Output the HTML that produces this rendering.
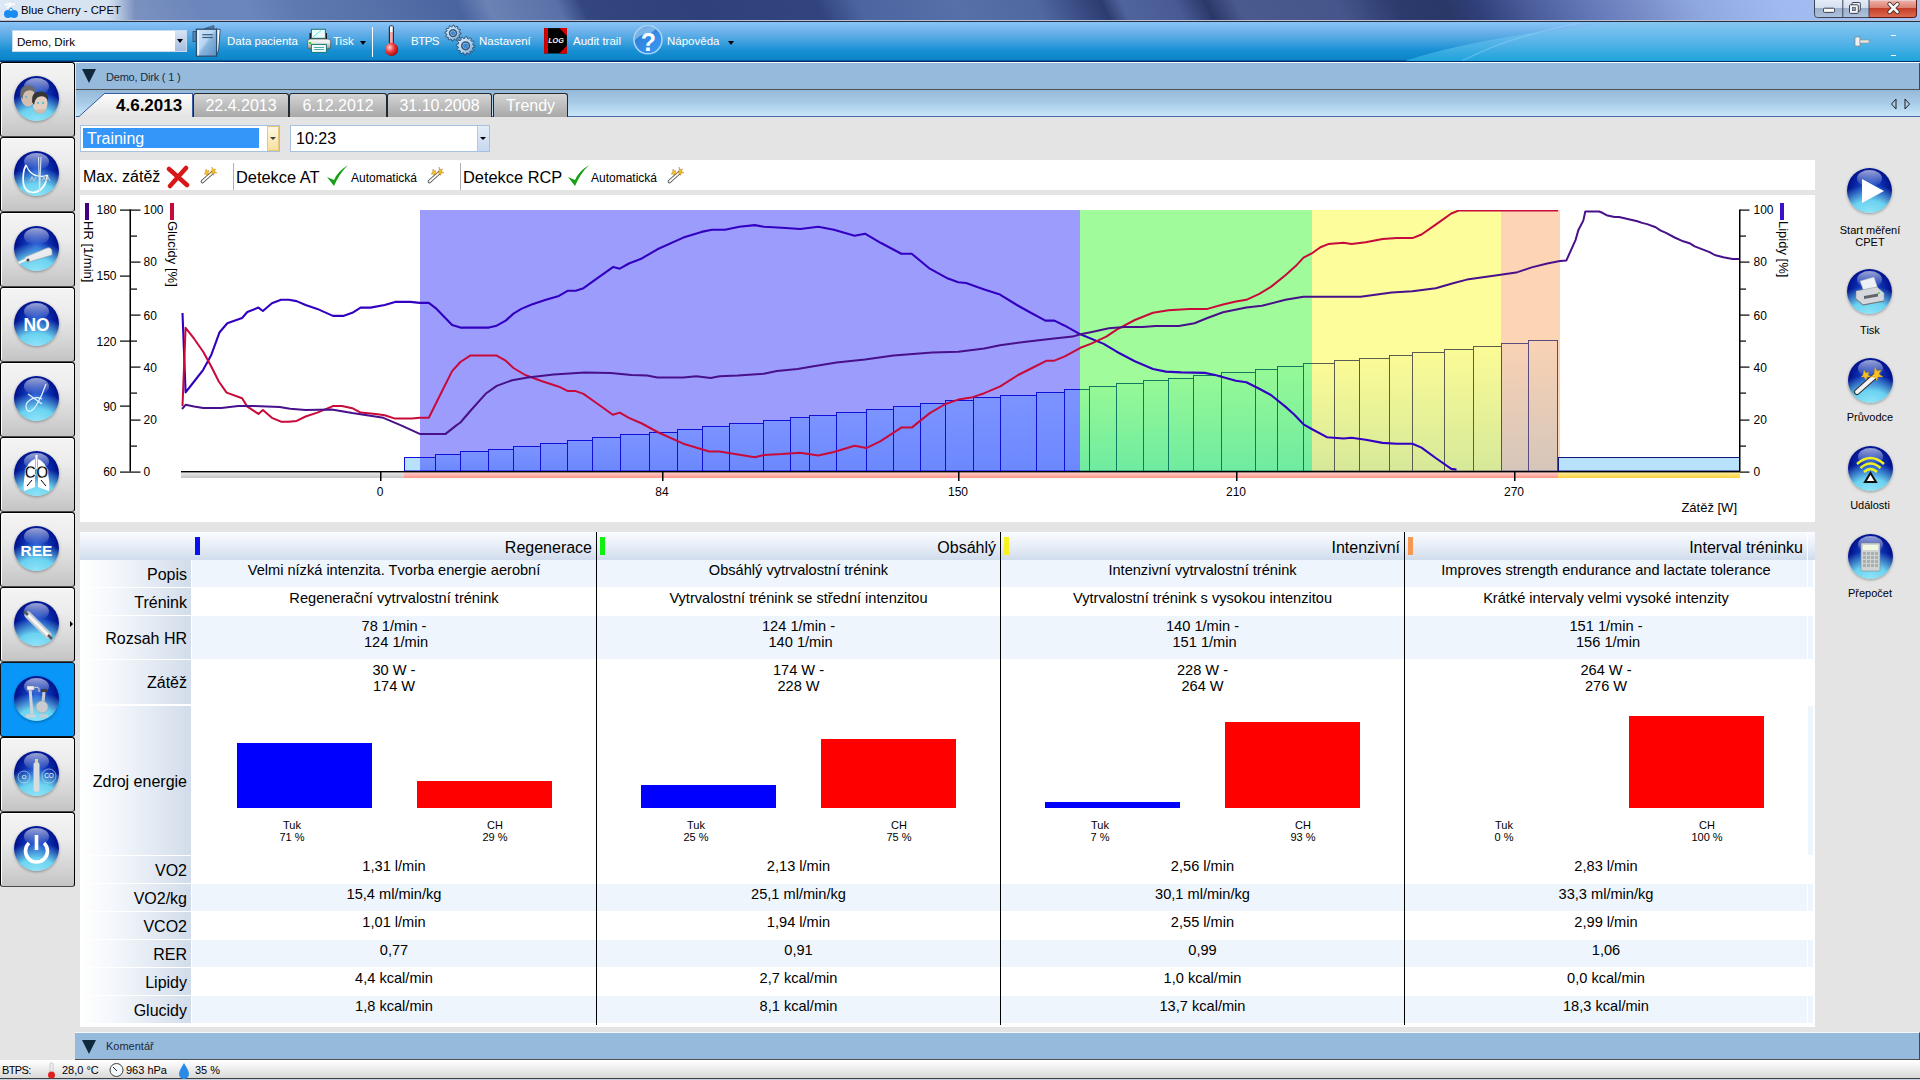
<!DOCTYPE html>
<html><head><meta charset="utf-8">
<style>
*{box-sizing:border-box}
html,body{margin:0;padding:0}
body{width:1920px;height:1080px;position:relative;overflow:hidden;background:#e4e4e4;font-family:"Liberation Sans",sans-serif;color:#000}
.a{position:absolute}
#title{left:0;top:0;width:1920px;height:21px;background:#5870a8 linear-gradient(64deg,#8aa0c8 4px,#8aa0c8 105px,#7c92c0 119px,#6c86bc 184px,#6a86bc 229px,#5e78b0 274px,#5670a8 346px,#4a64a0 418px,#6a82b4 445px,#5a70a8 508px,#34467e 530px,#30407a 634px,#32447e 742px,#4c64a0 778px,#5870a8 867px,#5068a0 939px,#3a4c84 975px,#2c3c70 998px,#50649c 1016px,#485a94 1065px,#2a3868 1092px,#4a5a8e 1119px,#46568c 1209px,#2c3a6c 1263px,#2a3868 1308px,#30407a 1335px,#4a5c9a 1380px,#6478b8 1434px,#7488c4 1470px,#90a8e0 1533px,#a0baf0 1605px,#a8c0f2 1730px)}
#title .t{left:21px;top:4px;font-size:11.3px;color:#000;letter-spacing:0}
#toolbar{left:0;top:20px;width:1920px;height:43px;background:linear-gradient(180deg,#b8c0d4 0,#b8c0d4 1px,#283040 1px,#283040 2px,#88c4f8 2px,#72b4ec 10px,#48a4e0 20px,#1a90d4 30px,#0a84c8 40px,#003070 41px,#003070 42px,#fff 42px)}
.tb{color:#fff;font-size:11.5px}
#sidebar .btn{position:absolute;left:0;width:75px;height:75px;border:1px solid #000;border-bottom-color:#4a4a4a;border-radius:3px;background:linear-gradient(180deg,#f4f4f4 0,#ececec 35%,#d4d4d4 75%,#c4c4c4 100%);box-shadow:inset 1px 1px 0 #fff}
#sidebar .btn.act{background:#0896f8;border-color:#101010;box-shadow:none}
.orb{position:absolute;left:13px;top:12.5px;width:45px;height:45px;border-radius:50%;background:radial-gradient(ellipse 95% 62% at 50% 100%,#90e4f8 0,#6ad2f0 45%,rgba(80,190,235,0) 100%),radial-gradient(circle at 50% 45%,#2a60d8 0,#0c30b0 36%,#000e88 66%,#000058 100%);box-shadow:0 1px 3px rgba(0,0,0,.35)}
.orb .hl{position:absolute;left:10px;top:2px;width:25px;height:17px;border-radius:50%;background:linear-gradient(180deg,rgba(255,255,255,.6),rgba(255,255,255,0))}
#phead{left:76px;top:63px;width:1844px;height:27px;background:#96badc;border-bottom:1px solid #505050;border-right:1px solid #484848}
#tabs{left:76px;top:90px;width:1844px;height:27px;background:linear-gradient(180deg,#94b8d8 0,#a8cce8 50%,#c8e6f8 100%);border-bottom:1px solid #4a6aa8}
.tab{position:absolute;top:3px;height:24px;border:1px solid #202830;border-bottom:none;border-radius:3px 3px 0 0;background:linear-gradient(180deg,#d4d4d4,#a8a8a8);color:#fff;font-size:16px;text-align:center;line-height:23px}
#content{left:75px;top:117px;width:1845px;height:943px;background:#e4e4e4}
.cb{position:absolute;background:#fff;border:1px solid #a8c0e0}
.white{position:absolute;background:#fff}
.lbl{position:absolute;font-size:16px;text-align:right}
.cell{position:absolute;font-size:14.6px;text-align:center;line-height:16px}
.rs{color:#000}
</style></head><body>
<div id="title" class="a">
 <div class="a" style="left:0;top:0;width:140px;height:20px;background:linear-gradient(90deg,#dce8f4 0,#d6e2f0 108px,rgba(160,180,214,0) 135px)"></div>
 <svg class="a" style="left:2px;top:2px" width="18" height="17" viewBox="0 0 18 17"><path d="M3 3 L9 1 M5 6 Q8 2 13 2" stroke="#fff" stroke-width="1.5" fill="none"/><circle cx="6" cy="12" r="4" fill="#1a8cf0"/><circle cx="12" cy="12" r="4" fill="#1a8cf0"/><path d="M7 8 Q9 4 11 8" stroke="#1a8cf0" fill="none"/></svg>
 <div class="a t">Blue Cherry - CPET</div>
 <svg class="a" style="left:1812px;top:0" width="108" height="20" viewBox="1812 0 108 20"><defs>
 <linearGradient id="wbg" x1="0" y1="0" x2="0" y2="1"><stop offset="0" stop-color="#e4ecf8"/><stop offset=".45" stop-color="#d4dfee"/><stop offset=".46" stop-color="#9cb0cc"/><stop offset="1" stop-color="#b0c2dc"/></linearGradient>
 <linearGradient id="wbr" x1="0" y1="0" x2="0" y2="1"><stop offset="0" stop-color="#eeb0a8"/><stop offset=".45" stop-color="#dc8070"/><stop offset=".46" stop-color="#c43c28"/><stop offset="1" stop-color="#dc6a50"/></linearGradient></defs>
 <path d="M1814.5 0 V14.5 Q1814.5 17.5 1817.5 17.5 H1913.5 Q1916.5 17.5 1916.5 14.5 V0" fill="url(#wbg)" stroke="#3c4456" stroke-width="1"/>
 <path d="M1869 0.5 H1916 V14.5 Q1916 17 1913.5 17 H1869 Z" fill="url(#wbr)"/>
 <path d="M1916.5 0 V14.5 Q1916.5 17.5 1913.5 17.5 H1869" fill="none" stroke="#5a1a10" stroke-width="1"/>
 <rect x="1842.3" y="0" width="1" height="17" fill="#3c4456"/><rect x="1868.5" y="0" width="1" height="17" fill="#3c4456"/>
 <rect x="1823.5" y="8.2" width="11" height="4.2" rx="1" fill="#f8f8f8" stroke="#3a4050" stroke-width="1"/>
 <rect x="1852" y="2.5" width="8.3" height="8.6" rx="1" fill="#f4f4f4" stroke="#3a4050" stroke-width="1"/>
 <rect x="1849.5" y="4.8" width="8.8" height="8.6" rx="1" fill="#f4f4f4" stroke="#3a4050" stroke-width="1"/>
 <rect x="1852.3" y="7.5" width="3.2" height="3.2" fill="#8aa0bc" stroke="#3a4050" stroke-width=".6"/>
 <path d="M1889.5 4 L1897.5 12 M1897.5 4 L1889.5 12" stroke="#3a2020" stroke-width="4.2" stroke-linecap="round"/>
 <path d="M1889.5 4 L1897.5 12 M1897.5 4 L1889.5 12" stroke="#fafafa" stroke-width="2.6" stroke-linecap="round"/>
 </svg>
</div>
<div id="toolbar" class="a"><svg class="a" style="left:0;top:2px" width="1920" height="39"><defs><linearGradient id="tbs" x1="0" y1="0" x2="0" y2="1"><stop offset="0" stop-color="#86c6f2"/><stop offset="0.5" stop-color="#58b4e8"/><stop offset="1" stop-color="#1ea4dc"/></linearGradient><linearGradient id="tbd" x1="0" y1="0" x2="1" y2="0"><stop offset="0" stop-color="#0050b0" stop-opacity="0"/><stop offset="1" stop-color="#0050b0" stop-opacity="0.22"/></linearGradient></defs><path d="M1405 39 Q1480 14 1625 0 H1920 V39 Z" fill="url(#tbs)"/><path d="M1462 39 Q1510 14 1580 1" fill="none" stroke="#a0d8f8" stroke-opacity=".35" stroke-width="1.5"/></svg><div class="a" style="left:0;top:1px;width:1920px;height:41px">
 <div class="a" style="left:12px;top:9px;width:175px;height:22px;background:#fff;border:1px solid #c8dcf0"></div>
 <div class="a" style="left:17px;top:14px;font-size:11.6px">Demo, Dirk</div>
 <div class="a" style="left:175px;top:10px;width:11px;height:20px;background:linear-gradient(180deg,#d8e4f4,#a8bce0)"></div>
 <div class="a" style="left:177px;top:18px;width:0;height:0;border-left:3.5px solid transparent;border-right:3.5px solid transparent;border-top:4px solid #000"></div>
 <div class="a tb" style="left:227px;top:14px">Data pacienta</div>
 <div class="a tb" style="left:333px;top:14px">Tisk</div>
 <div class="a" style="left:360px;top:20px;width:0;height:0;border-left:3.5px solid transparent;border-right:3.5px solid transparent;border-top:4px solid #000"></div>
 <div class="a" style="left:372px;top:6px;width:1px;height:30px;background:#fff"></div>
 <div class="a tb" style="left:411px;top:14px;letter-spacing:-0.5px">BTPS</div>
 <div class="a tb" style="left:479px;top:14px">Nastavení</div>
 <div class="a tb" style="left:573px;top:14px">Audit trail</div>
 <div class="a tb" style="left:667px;top:14px">Nápověda</div>
 <div class="a" style="left:728px;top:20px;width:0;height:0;border-left:3.5px solid transparent;border-right:3.5px solid transparent;border-top:4px solid #000"></div>
 <svg class="a" style="left:1854px;top:15px" width="16" height="11" viewBox="0 0 16 11"><rect x="1" y="1" width="5" height="9" fill="#f0f0f0" stroke="#808080" stroke-width=".7"/><rect x="6" y="4" width="9" height="3" fill="#e8e8e8" stroke="#909090" stroke-width=".6"/></svg>
 <div class="a" style="left:1891px;top:14px;width:5px;height:1px;background:#fff"></div>
 <div class="a" style="left:1891px;top:34px;width:5px;height:1px;background:#fff"></div>
</div></div>
<svg class="a" style="left:0;top:0" width="1920" height="62" viewBox="0 0 1920 62"><defs><linearGradient id="bindg" x1="0" y1="0" x2="1" y2="1"><stop offset="0" stop-color="#d0e6fa"/><stop offset=".45" stop-color="#b8d6f2"/><stop offset=".55" stop-color="#88b4dc"/><stop offset="1" stop-color="#5a90c4"/></linearGradient><linearGradient id="gearg" x1="0" y1="0" x2="1" y2="1"><stop offset="0" stop-color="#e8f4ff"/><stop offset=".6" stop-color="#a8cdf0"/><stop offset="1" stop-color="#6a90b8"/></linearGradient><linearGradient id="prb" x1="0" y1="0" x2="0" y2="1"><stop offset="0" stop-color="#fafafa"/><stop offset=".4" stop-color="#e8e8e8"/><stop offset="1" stop-color="#8a8a8a"/></linearGradient><radialGradient id="bulb" cx=".35" cy=".35" r=".7"><stop offset="0" stop-color="#ffd8d8"/><stop offset=".5" stop-color="#f03838"/><stop offset="1" stop-color="#a00808"/></radialGradient><linearGradient id="helpg" x1="0" y1="0" x2="1" y2="1"><stop offset="0" stop-color="#2a78d0"/><stop offset="1" stop-color="#3a9af8"/></linearGradient></defs><rect x="193" y="31.6" width="3.2" height="10" fill="#5a88b8" stroke="#2a4a70" stroke-width=".8"/><path d="M216 29 L220.2 29.4 L218.6 50 L216.5 55.5 Z" fill="#fff" stroke="#2a4a70" stroke-width=".9"/><path d="M204.5 28.6 L213.8 25.6 L214 29 Z" fill="#5a80a8" stroke="#2a4a70" stroke-width=".7"/><rect x="196.4" y="29.2" width="20.2" height="27" fill="url(#bindg)" stroke="#2a5070" stroke-width="1.3"/><rect x="197.4" y="30" width="1.6" height="25.4" fill="#e8f4ff"/><rect x="202.3" y="34.1" width="10.4" height="1.2" fill="#3a5a80"/><rect x="202.3" y="36.9" width="10.4" height="1.2" fill="#3a5a80"/><rect x="309.5" y="33" width="17.5" height="8" fill="#1a1a1a"/><rect x="311.4" y="29.3" width="14" height="9" fill="#e8fcfc" stroke="#1a7a70" stroke-width="1"/><path d="M313 37 L321 30.5" stroke="#70e0e0" stroke-width="1"/><rect x="307.6" y="39" width="23" height="10" rx="2.5" fill="url(#prb)" stroke="#505050" stroke-width=".7"/><rect x="308.8" y="42" width="2.3" height="1.8" fill="#10e010"/><rect x="311.4" y="44.4" width="15" height="8" fill="#f0fcfc" stroke="#1a7a70" stroke-width="1"/><rect x="314" y="47" width="10" height=".9" fill="#40a0a0"/><rect x="314" y="49" width="10" height=".9" fill="#40a0a0"/><rect x="388.8" y="25.3" width="5.2" height="19" rx="2.6" fill="#303030"/><rect x="390" y="26.3" width="2.8" height="6" fill="#fafafa"/><rect x="390" y="32" width="2.8" height="12" fill="#f8a8a8"/><circle cx="391.6" cy="49.4" r="6.6" fill="url(#bulb)"/><polygon points="461.00,33.10 460.93,34.14 459.18,34.76 458.91,35.55 459.93,37.10 459.35,37.97 457.53,37.63 456.90,38.18 457.00,40.03 456.06,40.49 454.66,39.28 453.84,39.45 453.00,41.10 451.96,41.03 451.34,39.28 450.55,39.01 449.00,40.03 448.13,39.45 448.47,37.63 447.92,37.00 446.07,37.10 445.61,36.16 446.82,34.76 446.65,33.94 445.00,33.10 445.07,32.06 446.82,31.44 447.09,30.65 446.07,29.10 446.65,28.23 448.47,28.57 449.10,28.02 449.00,26.17 449.94,25.71 451.34,26.92 452.16,26.75 453.00,25.10 454.04,25.17 454.66,26.92 455.45,27.19 457.00,26.17 457.87,26.75 457.53,28.57 458.08,29.20 459.93,29.10 460.39,30.04 459.18,31.44 459.35,32.26" fill="url(#gearg)" stroke="#2a4868" stroke-width=".9"/><circle cx="453.0" cy="33.1" r="3.4" fill="none" stroke="#3a5878" stroke-width="1.6"/><circle cx="453.0" cy="33.1" r="2.2" fill="#3a8ad8"/><polygon points="474.90,45.80 474.82,47.01 472.75,47.72 472.44,48.63 473.65,50.45 472.98,51.46 470.83,51.03 470.10,51.67 470.25,53.85 469.16,54.39 467.52,52.95 466.57,53.14 465.60,55.10 464.39,55.02 463.68,52.95 462.77,52.64 460.95,53.85 459.94,53.18 460.37,51.03 459.73,50.30 457.55,50.45 457.01,49.36 458.45,47.72 458.26,46.77 456.30,45.80 456.38,44.59 458.45,43.88 458.76,42.97 457.55,41.15 458.22,40.14 460.37,40.57 461.10,39.93 460.95,37.75 462.04,37.21 463.68,38.65 464.63,38.46 465.60,36.50 466.81,36.58 467.52,38.65 468.43,38.96 470.25,37.75 471.26,38.42 470.83,40.57 471.47,41.30 473.65,41.15 474.19,42.24 472.75,43.88 472.94,44.83" fill="url(#gearg)" stroke="#2a4868" stroke-width=".9"/><circle cx="465.6" cy="45.8" r="3.8" fill="none" stroke="#3a5878" stroke-width="1.6"/><circle cx="465.6" cy="45.8" r="2.6" fill="#3a8ad8"/><rect x="544.1" y="28.1" width="22.8" height="25.4" fill="#000"/><rect x="544.1" y="28.1" width="3.9" height="25.4" fill="#d80000"/><path d="M559.3 28.1 H566.9 V36 Z M559.3 53.5 H566.9 V45.6 Z" fill="#d80000"/><text x="556" y="43" font-size="7.2" font-style="italic" font-weight="bold" fill="#fff" text-anchor="middle" font-family="Liberation Sans">LOG</text><circle cx="648" cy="39.8" r="14" fill="url(#helpg)" stroke="#a8d4f4" stroke-width="1.6"/><path d="M635 40 Q640 34 651 33 L657 28 Q648 25.5 640 28.5 Q635 32 635 40Z" fill="#9ac8ec" opacity=".7"/><text x="648.5" y="50.5" font-size="25" font-weight="bold" fill="#fff" text-anchor="middle" font-family="Liberation Sans">?</text></svg>
<div id="sidebar">
<div class="btn" style="top:62px"><div class="orb"><div class="hl"></div></div><svg class="a" style="left:13px;top:12.5px" width="46" height="46"><ellipse cx="14" cy="21" rx="7" ry="9.5" fill="#d4beb0"/><path d="M6.5 21 Q5 9.5 14 9.5 Q22.5 9.5 21.5 18 Q19 13.5 14 14.5 Q9 15 8.5 23Z" fill="#6a6a6a"/><ellipse cx="26" cy="27" rx="7.5" ry="10" fill="#e2cec2"/><path d="M18 26 Q17 15.5 26 15.5 Q35 15.5 34 24.5 Q31 19.5 26 20.5 Q21 21 20 29Z" fill="#353535"/><path d="M19 34 Q22 39 27 38 Q32 37 33 33" fill="#c8b0a0" opacity=".6"/><circle cx="24" cy="27" r="1" fill="#30c0d0"/><circle cx="29" cy="27" r="1" fill="#30c0d0"/><circle cx="12" cy="21" r=".9" fill="#30c0d0"/></svg></div>
<div class="btn" style="top:137px"><div class="orb"><div class="hl"></div></div><svg class="a" style="left:13px;top:12.5px" width="46" height="46"><path d="M12 14 Q8 22 9.5 33 Q11 41 19 41.5 Q27 41 31 33 Q33 28 33.5 24" fill="none" stroke="#fff" stroke-width="1.7"/><path d="M12 14 Q16 24 24 25 Q30 26 33.5 24" fill="none" stroke="#fff" stroke-width="1.2"/><path d="M24.5 6 L25.5 41 L27 6" fill="none" stroke="#d8e0e8" stroke-width="1.1"/><path d="M16 30 L18 26 L20 30 L22 26 M28 30 L30 26 L32 30 L34 26 L36 30" fill="none" stroke="#b8c4d0" stroke-width="1.1"/></svg></div>
<div class="btn" style="top:212px"><div class="orb"><div class="hl"></div></div><svg class="a" style="left:13px;top:12.5px" width="46" height="46"><path d="M11 31 L33 22 Q37 21 38 25 L38 29 L15 36 Q11 36 11 32Z" fill="#e8ecee" stroke="#98a0a8" stroke-width=".7"/><path d="M4 36 L12 32 L12 35 L5 38Z" fill="#f0f0f0"/><circle cx="14" cy="34" r="1.5" fill="#404040"/></svg></div>
<div class="btn" style="top:287px"><div class="orb"><div class="hl"></div></div><svg class="a" style="left:13px;top:12.5px" width="46" height="46"><text x="22.5" y="30" font-size="17.5" font-weight="bold" fill="#fff" text-anchor="middle" font-family="Liberation Sans">NO</text></svg></div>
<div class="btn" style="top:362px"><div class="orb"><div class="hl"></div></div><svg class="a" style="left:13px;top:12.5px" width="46" height="46"><path d="M32 8 Q28 20 22 30 Q16 38 13 34 Q10 28 16 24 Q22 20 28 23 M14 18 L28 28" fill="none" stroke="#e8f4ff" stroke-width="1.2"/></svg></div>
<div class="btn" style="top:437px"><div class="orb"><div class="hl"></div></div><svg class="a" style="left:13px;top:12.5px" width="46" height="46"><path d="M21 8 Q14 10 11 22 Q9 34 10 40 Q16 38 21 36Z M24 8 Q31 10 34 22 Q36 34 35 40 Q29 38 24 36Z" fill="#fff"/><rect x="21.5" y="4" width="2" height="14" fill="#fff"/><text x="22.5" y="27" font-size="16" font-weight="bold" fill="#000" text-anchor="middle" font-family="Liberation Sans" stroke="#fff" stroke-width=".6">CO</text><path d="M18 29 L13 35 M27 29 L32 35" stroke="#000" stroke-width="1"/></svg></div>
<div class="btn" style="top:512px"><div class="orb"><div class="hl"></div></div><svg class="a" style="left:13px;top:12.5px" width="46" height="46"><text x="22.5" y="29.5" font-size="15.5" font-weight="bold" fill="#fff" text-anchor="middle" font-family="Liberation Sans">REE</text></svg></div>
<div class="btn" style="top:587px"><div class="orb"><div class="hl"></div></div><svg class="a" style="left:13px;top:12.5px" width="46" height="46"><path d="M14 14 L34 34" stroke="#c8ccd0" stroke-width="7" stroke-linecap="round"/><path d="M14 14 L34 34" stroke="#f4f6f8" stroke-width="3" stroke-linecap="round"/><path d="M10 10 L14 14 M34 34 L38 38" stroke="#505860" stroke-width="2.5"/></svg></div>
<div class="btn act" style="top:662px"><div class="orb"><div class="hl"></div></div><svg class="a" style="left:13px;top:12.5px" width="46" height="46"><path d="M16 12 L18 38 M12 40 H22" stroke="#d0d4d8" stroke-width="3" fill="none"/><rect x="13" y="10" width="7" height="4" fill="#f0f0f0" stroke="#909090" stroke-width=".5"/><path d="M20 12 Q26 9 25 16" stroke="#e0e0e0" stroke-width="1" fill="none"/><path d="M30 16 L28 36 M26 40 H34" stroke="#c8ccd0" stroke-width="3"/><rect x="27" y="13" width="6" height="3" fill="#404040"/><circle cx="28" cy="31" r="6" fill="#c8ccd0" stroke="#a0a4a8" stroke-width=".6"/></svg></div>
<div class="btn" style="top:737px"><div class="orb"><div class="hl"></div></div><svg class="a" style="left:13px;top:12.5px" width="46" height="46"><rect x="19.5" y="11" width="6" height="30" rx="3" fill="#d8dcde"/><rect x="21" y="8" width="3" height="4" fill="#e0d890"/><circle cx="10" cy="26" r="6" fill="none" stroke="#d0e8f4" stroke-width=".6"/><circle cx="35" cy="25" r="7" fill="none" stroke="#d0e8f4" stroke-width=".6"/><text x="10" y="28" font-size="6" fill="#fff" text-anchor="middle" font-family="Liberation Sans">O</text><text x="35" y="27" font-size="6.5" fill="#fff" text-anchor="middle" font-family="Liberation Sans">CO</text></svg></div>
<div class="btn" style="top:812px"><div class="orb"><div class="hl"></div></div><svg class="a" style="left:13px;top:12.5px" width="46" height="46"><path d="M15 17 A11 11 0 1 0 30 17" fill="none" stroke="#fff" stroke-width="3.6"/><path d="M22.5 9 V24" stroke="#fff" stroke-width="3.6"/></svg></div>
<div class="a" style="left:70px;top:621px;width:0;height:0;border-top:3px solid transparent;border-bottom:3px solid transparent;border-left:3px solid #000"></div>
</div>
<div id="phead" class="a">
 <div class="a" style="left:6px;top:6px;width:0;height:0;border-left:7px solid transparent;border-right:7px solid transparent;border-top:14px solid #10283c"></div>
 <div class="a" style="left:30px;top:8px;font-size:11px;color:#1a2a40;letter-spacing:-0.2px">Demo, Dirk ( 1 )</div>
</div>
<div id="tabs" class="a">
 <svg class="a" style="left:0;top:0" width="120" height="27"><path d="M3 26.5 L28.5 3.5 H117 V27 H0 Z" fill="url(#tg)"/><defs><linearGradient id="tg" x1="0" y1="0" x2="0" y2="1"><stop offset="0" stop-color="#fcfcfc"/><stop offset="1" stop-color="#e4e4e4"/></linearGradient></defs><path d="M0 26.5 H3 L28.5 3.5 H117" fill="none" stroke="#3a5aa0" stroke-width="1"/></svg>
 <div class="a" style="left:28px;top:3px;width:89px;height:24px;background:linear-gradient(180deg,#fcfcfc,#e4e4e4);border-top:1px solid #3a5aa0;border-right:1px solid #3a5aa0"></div>
 <div class="a" style="left:40px;top:6px;font-size:17px;font-weight:bold">4.6.2013</div>
 <div class="tab" style="left:117px;width:96px">22.4.2013</div>
 <div class="tab" style="left:213px;width:98px">6.12.2012</div>
 <div class="tab" style="left:311px;width:105px">31.10.2008</div>
 <div class="tab" style="left:417px;width:75px">Trendy</div>
 <svg class="a" style="left:1814px;top:8px" width="22" height="12" viewBox="0 0 22 12"><path d="M6 1 L1.5 6 L6 11 Z" fill="none" stroke="#202020"/><path d="M15 1 L19.5 6 L15 11 Z" fill="none" stroke="#202020"/></svg>
</div>
<div class="cb" style="left:80px;top:125px;width:200px;height:27px"></div>
<div class="a" style="left:83px;top:128px;width:176px;height:20px;background:#3396f8"></div>
<div class="a" style="left:87px;top:130px;font-size:16px;color:#fff">Training</div>
<div class="a" style="left:267px;top:126px;width:12px;height:25px;background:linear-gradient(180deg,#fff8e0,#f8e0a0);border:1px solid #e8c878"></div>
<div class="a" style="left:270px;top:137px;border-left:3px solid transparent;border-right:3px solid transparent;border-top:3px solid #404040"></div>
<div class="cb" style="left:290px;top:125px;width:200px;height:27px"></div>
<div class="a" style="left:296px;top:130px;font-size:16px;color:#000">10:23</div>
<div class="a" style="left:477px;top:126px;width:12px;height:25px;background:linear-gradient(180deg,#e4ecf8,#c8d8f0);border-left:1px solid #b8c8e0"></div>
<div class="a" style="left:480px;top:137px;border-left:3px solid transparent;border-right:3px solid transparent;border-top:3px solid #000"></div>
<div class="white" style="left:80px;top:160px;width:1735px;height:30px"></div>
<div class="a" style="left:83px;top:168px;font-size:16px">Max. zátěž</div>
<svg class="a" style="left:166px;top:165px" width="24" height="24" viewBox="0 0 24 24"><path d="M3 4 L21 20 M20 3 L4 21" stroke="#d81818" stroke-width="4.5" stroke-linecap="round"/></svg>
<svg class="a" style="left:200px;top:166px" width="18" height="18" viewBox="0 0 18 18"><path d="M2.5 15.5 L13 6" stroke="#404040" stroke-width="3.6" stroke-linecap="round"/><path d="M2.5 15.5 L13 6" stroke="#fafafa" stroke-width="2" stroke-linecap="round"/><path d="M6 3 L7 5 L9 4.5 L8 6.5 L10 8 L7.5 8 L7 10 L6 8 L4 8 L5.5 6.5Z M12 1 L13 3.5 L15.5 3 L14.5 5.5 L17 7 L14 7 L13.5 9.5 L12.5 7 L10 7 L12 5.5Z" fill="#f8c028" stroke="#b07818" stroke-width=".4"/></svg>
<div class="a" style="left:233px;top:163px;width:1px;height:27px;background:#b0b0b0"></div>
<div class="a" style="left:236px;top:168px;font-size:16.4px">Detekce AT</div>
<svg class="a" style="left:325px;top:164px" width="24" height="24" viewBox="0 0 24 24"><path d="M2 13 L9 22 Q14 10 23 1 Q12 8 9 16 Z" fill="#18a018"/></svg>
<div class="a" style="left:351px;top:171px;font-size:12px">Automatická</div>
<svg class="a" style="left:427px;top:166px" width="18" height="18" viewBox="0 0 18 18"><path d="M2.5 15.5 L13 6" stroke="#404040" stroke-width="3.6" stroke-linecap="round"/><path d="M2.5 15.5 L13 6" stroke="#fafafa" stroke-width="2" stroke-linecap="round"/><path d="M6 3 L7 5 L9 4.5 L8 6.5 L10 8 L7.5 8 L7 10 L6 8 L4 8 L5.5 6.5Z M12 1 L13 3.5 L15.5 3 L14.5 5.5 L17 7 L14 7 L13.5 9.5 L12.5 7 L10 7 L12 5.5Z" fill="#f8c028" stroke="#b07818" stroke-width=".4"/></svg>
<div class="a" style="left:460px;top:163px;width:1px;height:27px;background:#b0b0b0"></div>
<div class="a" style="left:463px;top:168px;font-size:16.4px">Detekce RCP</div>
<svg class="a" style="left:566px;top:164px" width="24" height="24" viewBox="0 0 24 24"><path d="M2 13 L9 22 Q14 10 23 1 Q12 8 9 16 Z" fill="#18a018"/></svg>
<div class="a" style="left:591px;top:171px;font-size:12px">Automatická</div>
<svg class="a" style="left:667px;top:166px" width="18" height="18" viewBox="0 0 18 18"><path d="M2.5 15.5 L13 6" stroke="#404040" stroke-width="3.6" stroke-linecap="round"/><path d="M2.5 15.5 L13 6" stroke="#fafafa" stroke-width="2" stroke-linecap="round"/><path d="M6 3 L7 5 L9 4.5 L8 6.5 L10 8 L7.5 8 L7 10 L6 8 L4 8 L5.5 6.5Z M12 1 L13 3.5 L15.5 3 L14.5 5.5 L17 7 L14 7 L13.5 9.5 L12.5 7 L10 7 L12 5.5Z" fill="#f8c028" stroke="#b07818" stroke-width=".4"/></svg>
<div class="white" style="left:80px;top:195px;width:1735px;height:327px"><svg width="1735" height="327" viewBox="80 195 1735 327" style="position:absolute;left:0;top:0">
<defs>
<linearGradient id="gb" x1="0" y1="0" x2="0" y2="1"><stop offset="0" stop-color="#7c94ff"/><stop offset="1" stop-color="#6c88ff"/></linearGradient><linearGradient id="gray" x1="0" y1="0" x2="0" y2="1"><stop offset="0" stop-color="#ececec"/><stop offset="1" stop-color="#c4c4c4"/></linearGradient><linearGradient id="redb" x1="0" y1="0" x2="0" y2="1"><stop offset="0" stop-color="#ffd4d0"/><stop offset="1" stop-color="#ff9488"/></linearGradient><linearGradient id="yelb" x1="0" y1="0" x2="0" y2="1"><stop offset="0" stop-color="#fff0a0"/><stop offset="1" stop-color="#ffd040"/></linearGradient>
<linearGradient id="gg" x1="0" y1="0" x2="0" y2="1"><stop offset="0" stop-color="#96f996"/><stop offset="1" stop-color="#6feba0"/></linearGradient>
<linearGradient id="gy" x1="0" y1="0" x2="0" y2="1"><stop offset="0" stop-color="#fbfb96"/><stop offset="1" stop-color="#d6e999"/></linearGradient>
<linearGradient id="go" x1="0" y1="0" x2="0" y2="1"><stop offset="0" stop-color="#f9d2b4"/><stop offset="1" stop-color="#d5c6ba"/></linearGradient>
<linearGradient id="glb" x1="0" y1="0" x2="0" y2="1"><stop offset="0" stop-color="#b4e0fc"/><stop offset="1" stop-color="#c0e8fc"/></linearGradient>
</defs>
<rect x="420" y="210" width="660" height="261" fill="#9c9cfc"/>
<rect x="1080" y="210" width="232" height="261" fill="#a0fc9a"/>
<rect x="1312" y="210" width="189" height="261" fill="#fdfd9b"/>
<rect x="1501" y="210" width="59" height="261" fill="#fdd4b4"/>
<clipPath id="cz0"><rect x="181" y="200" width="239" height="280"/></clipPath>
<g clip-path="url(#cz0)">
<rect x="404.5" y="457.5" width="31.0" height="13.5" fill="#b8e2fc" stroke="#0e10d8" stroke-width="1"/>
</g>
<clipPath id="cz1"><rect x="420" y="200" width="660" height="280"/></clipPath>
<g clip-path="url(#cz1)">
<rect x="404.5" y="457.5" width="31.0" height="13.5" fill="url(#gb)" stroke="#0e10d8" stroke-width="1"/>
<rect x="435.5" y="454.5" width="25.0" height="16.5" fill="url(#gb)" stroke="#0e10d8" stroke-width="1"/>
<rect x="460.5" y="451.5" width="28.0" height="19.5" fill="url(#gb)" stroke="#0e10d8" stroke-width="1"/>
<rect x="488.5" y="449.5" width="25.0" height="21.5" fill="url(#gb)" stroke="#0e10d8" stroke-width="1"/>
<rect x="513.5" y="446.5" width="27.0" height="24.5" fill="url(#gb)" stroke="#0e10d8" stroke-width="1"/>
<rect x="540.5" y="443.5" width="27.0" height="27.5" fill="url(#gb)" stroke="#0e10d8" stroke-width="1"/>
<rect x="567.5" y="440.5" width="25.0" height="30.5" fill="url(#gb)" stroke="#0e10d8" stroke-width="1"/>
<rect x="592.5" y="437.5" width="28.0" height="33.5" fill="url(#gb)" stroke="#0e10d8" stroke-width="1"/>
<rect x="620.5" y="434.5" width="29.0" height="36.5" fill="url(#gb)" stroke="#0e10d8" stroke-width="1"/>
<rect x="649.5" y="432.5" width="28.0" height="38.5" fill="url(#gb)" stroke="#0e10d8" stroke-width="1"/>
<rect x="677.5" y="429.5" width="25.0" height="41.5" fill="url(#gb)" stroke="#0e10d8" stroke-width="1"/>
<rect x="702.5" y="426.5" width="27.0" height="44.5" fill="url(#gb)" stroke="#0e10d8" stroke-width="1"/>
<rect x="729.5" y="423.5" width="34.0" height="47.5" fill="url(#gb)" stroke="#0e10d8" stroke-width="1"/>
<rect x="763.5" y="420.5" width="27.0" height="50.5" fill="url(#gb)" stroke="#0e10d8" stroke-width="1"/>
<rect x="790.5" y="417.5" width="19.0" height="53.5" fill="url(#gb)" stroke="#0e10d8" stroke-width="1"/>
<rect x="809.5" y="415.5" width="27.0" height="55.5" fill="url(#gb)" stroke="#0e10d8" stroke-width="1"/>
<rect x="836.5" y="412.5" width="30.0" height="58.5" fill="url(#gb)" stroke="#0e10d8" stroke-width="1"/>
<rect x="866.5" y="409.5" width="27.0" height="61.5" fill="url(#gb)" stroke="#0e10d8" stroke-width="1"/>
<rect x="893.5" y="406.5" width="27.0" height="64.5" fill="url(#gb)" stroke="#0e10d8" stroke-width="1"/>
<rect x="920.5" y="403.5" width="25.0" height="67.5" fill="url(#gb)" stroke="#0e10d8" stroke-width="1"/>
<rect x="945.5" y="400.5" width="28.0" height="70.5" fill="url(#gb)" stroke="#0e10d8" stroke-width="1"/>
<rect x="973.5" y="397.5" width="27.0" height="73.5" fill="url(#gb)" stroke="#0e10d8" stroke-width="1"/>
<rect x="1000.5" y="395.5" width="36.0" height="75.5" fill="url(#gb)" stroke="#0e10d8" stroke-width="1"/>
<rect x="1036.5" y="392.5" width="28.0" height="78.5" fill="url(#gb)" stroke="#0e10d8" stroke-width="1"/>
<rect x="1064.5" y="389.5" width="25.0" height="81.5" fill="url(#gb)" stroke="#0e10d8" stroke-width="1"/>
</g>
<clipPath id="cz2"><rect x="1080" y="200" width="232" height="280"/></clipPath>
<g clip-path="url(#cz2)">
<rect x="1064.5" y="389.5" width="25.0" height="81.5" fill="url(#gg)" stroke="#107a60" stroke-width="1"/>
<rect x="1089.5" y="386.5" width="27.0" height="84.5" fill="url(#gg)" stroke="#107a60" stroke-width="1"/>
<rect x="1116.5" y="383.5" width="27.0" height="87.5" fill="url(#gg)" stroke="#107a60" stroke-width="1"/>
<rect x="1143.5" y="380.5" width="25.0" height="90.5" fill="url(#gg)" stroke="#107a60" stroke-width="1"/>
<rect x="1168.5" y="378.5" width="25.0" height="92.5" fill="url(#gg)" stroke="#107a60" stroke-width="1"/>
<rect x="1193.5" y="375.5" width="28.0" height="95.5" fill="url(#gg)" stroke="#107a60" stroke-width="1"/>
<rect x="1221.5" y="372.5" width="34.0" height="98.5" fill="url(#gg)" stroke="#107a60" stroke-width="1"/>
<rect x="1255.5" y="369.5" width="22.0" height="101.5" fill="url(#gg)" stroke="#107a60" stroke-width="1"/>
<rect x="1277.5" y="366.5" width="26.0" height="104.5" fill="url(#gg)" stroke="#107a60" stroke-width="1"/>
<rect x="1303.5" y="363.5" width="31.0" height="107.5" fill="url(#gg)" stroke="#107a60" stroke-width="1"/>
</g>
<clipPath id="cz3"><rect x="1312" y="200" width="189" height="280"/></clipPath>
<g clip-path="url(#cz3)">
<rect x="1303.5" y="363.5" width="31.0" height="107.5" fill="url(#gy)" stroke="#5c5c50" stroke-width="1"/>
<rect x="1334.5" y="360.5" width="25.0" height="110.5" fill="url(#gy)" stroke="#5c5c50" stroke-width="1"/>
<rect x="1359.5" y="358.5" width="30.0" height="112.5" fill="url(#gy)" stroke="#5c5c50" stroke-width="1"/>
<rect x="1389.5" y="355.5" width="23.0" height="115.5" fill="url(#gy)" stroke="#5c5c50" stroke-width="1"/>
<rect x="1412.5" y="352.5" width="32.0" height="118.5" fill="url(#gy)" stroke="#5c5c50" stroke-width="1"/>
<rect x="1444.5" y="349.5" width="29.0" height="121.5" fill="url(#gy)" stroke="#5c5c50" stroke-width="1"/>
<rect x="1473.5" y="346.5" width="28.0" height="124.5" fill="url(#gy)" stroke="#5c5c50" stroke-width="1"/>
<rect x="1501.5" y="343.5" width="27.0" height="127.5" fill="url(#gy)" stroke="#5c5c50" stroke-width="1"/>
</g>
<clipPath id="cz4"><rect x="1501" y="200" width="58" height="280"/></clipPath>
<g clip-path="url(#cz4)">
<rect x="1473.5" y="346.5" width="28.0" height="124.5" fill="url(#go)" stroke="#5a4a80" stroke-width="1"/>
<rect x="1501.5" y="343.5" width="27.0" height="127.5" fill="url(#go)" stroke="#5a4a80" stroke-width="1"/>
<rect x="1528.5" y="340.5" width="29.0" height="130.5" fill="url(#go)" stroke="#5a4a80" stroke-width="1"/>
</g>
<rect x="1558.5" y="457.5" width="181" height="13.5" fill="#b8e2fc" stroke="#101880" stroke-width="1"/>
<rect x="181" y="472" width="223" height="6" fill="url(#gray)"/>
<rect x="404" y="472" width="1154" height="6" fill="url(#redb)"/>
<rect x="1558" y="472" width="182" height="6" fill="url(#yelb)"/>
<rect x="181" y="471" width="1559" height="1.4" fill="#000"/>
<clipPath id="plotc"><rect x="180" y="210" width="1562" height="264"/></clipPath><g clip-path="url(#plotc)">
<polyline points="182.5,313.0 185.6,392.4 194.1,381.5 203.2,369.8 211.0,355.6 219.6,332.2 227.3,323.2 242.1,318.0 247.3,312.0 258.4,307.6 262.9,311.0 271.9,303.2 281.0,299.8 288.8,299.8 296.6,301.1 305.6,305.0 317.3,308.9 332.9,315.9 343.2,315.9 352.3,312.8 360.6,307.6 370.5,307.6 384.7,305.0 395.1,301.9 410.6,301.9 419.7,302.9 428.8,302.9 436.6,308.9 452.1,325.0 460.4,327.6 488.9,327.6 496.7,325.7 505.7,320.6 513.5,313.6 521.3,308.9 531.7,304.5 545.9,299.8 558.9,295.9 568.0,290.7 575.7,290.7 583.5,288.2 597.8,277.8 613.3,266.9 619.8,268.7 628.9,263.5 640.6,259.1 657.4,249.3 683.3,237.6 701.5,231.9 711.9,229.8 725.0,229.8 739.3,226.7 754.8,225.1 763.9,226.7 782.0,227.7 800.2,229.0 818.3,226.7 833.9,229.8 854.6,235.8 865.0,233.7 880.6,242.8 901.3,253.7 911.7,253.7 929.8,268.7 948.0,278.6 958.3,282.2 966.1,283.0 984.3,289.4 1000.0,294.6 1016.9,305.0 1028.5,311.5 1045.4,320.6 1054.4,320.6 1064.8,325.7 1080.4,334.3 1103.7,343.9 1116.7,351.7 1134.8,361.3 1153.0,369.0 1165.9,371.6 1181.5,372.4 1204.8,372.9 1215.2,375.0 1235.9,380.7 1246.3,382.3 1259.3,388.8 1270.9,395.0 1285.4,406.6 1294.4,414.7 1303.5,424.3 1312.6,429.5 1326.9,437.2 1343.7,438.5 1351.5,437.7 1365.7,439.8 1382.6,442.9 1396.9,443.7 1412.4,443.7 1421.5,447.6 1435.7,458.0 1451.3,468.9 1456.5,469.6" fill="none" stroke="#3200c0" stroke-width="2.1" stroke-linejoin="round"/>
<polyline points="182.5,406.0 185.6,327.8 194.1,338.7 203.2,351.7 211.0,366.0 218.8,381.5 226.6,392.6 242.1,398.3 247.3,406.6 258.4,413.9 262.9,410.0 271.9,417.8 281.0,421.7 288.8,421.7 296.6,420.9 305.6,416.5 317.3,412.6 332.9,406.1 341.9,406.1 352.3,408.2 360.6,412.6 375.6,413.9 384.7,415.2 395.1,418.6 411.9,418.6 419.7,417.8 428.8,417.8 443.0,389.3 452.1,371.1 460.4,362.0 470.2,355.6 496.7,355.6 505.7,360.7 513.5,368.0 525.2,375.0 540.7,380.7 558.9,386.7 568.0,391.1 575.7,391.1 583.5,393.9 597.8,404.0 612.8,414.7 619.8,412.6 628.9,417.8 641.9,423.5 657.4,432.0 683.3,443.7 709.3,451.5 719.6,451.5 738.0,454.6 754.8,457.2 763.9,454.9 782.0,454.1 800.2,452.8 818.3,455.4 833.9,452.0 854.6,445.8 866.3,448.1 880.6,441.1 901.3,427.6 911.7,427.6 929.8,413.1 945.4,404.0 958.3,399.6 971.3,397.6 984.3,393.2 999.8,386.7 1018.1,375.0 1031.1,368.5 1046.7,360.7 1054.4,360.7 1064.8,356.3 1080.4,347.8 1090.7,343.9 1106.3,336.6 1116.7,329.6 1134.8,320.0 1153.0,312.8 1168.5,310.2 1189.3,308.9 1207.4,308.9 1223.0,304.5 1235.9,301.6 1246.3,299.8 1259.3,293.9 1270.9,286.9 1285.4,275.2 1295.7,266.1 1303.5,257.6 1311.3,253.7 1320.4,247.2 1328.2,244.1 1343.7,242.8 1351.5,244.1 1365.7,242.3 1382.6,238.9 1396.9,238.1 1412.4,238.1 1421.5,234.5 1435.7,224.6 1451.3,213.5 1459.1,210.4 1558.0,210.4" fill="none" stroke="#c80a3a" stroke-width="2" stroke-linejoin="round"/>
<polyline points="182.0,409.0 185.6,404.8 194.1,406.6 203.2,407.9 221.4,407.9 238.2,406.1 253.8,406.1 279.7,406.9 290.1,408.7 305.6,410.0 331.6,409.5 352.3,413.1 383.4,417.8 401.6,425.6 419.7,433.9 445.6,433.9 456.0,425.6 460.4,422.5 470.7,410.5 486.3,393.2 496.7,385.9 512.2,380.2 527.8,377.6 553.7,374.5 584.8,372.4 610.7,372.9 631.5,375.0 647.0,375.5 657.4,377.6 683.3,377.6 696.3,376.3 710.6,378.1 719.6,376.3 738.0,375.5 763.9,373.7 776.9,371.1 797.6,369.0 810.6,366.7 836.5,362.6 865.0,359.5 893.5,355.6 932.4,352.4 958.3,351.7 984.3,348.6 1000.0,345.2 1025.9,341.8 1051.9,338.7 1072.6,336.6 1080.4,334.3 1090.7,332.2 1108.9,328.3 1124.5,327.0 1142.6,327.0 1155.6,326.0 1178.9,326.0 1194.5,323.2 1207.4,318.0 1223.0,312.3 1246.3,307.6 1261.9,305.8 1285.4,299.8 1303.5,296.7 1360.6,296.7 1391.7,292.6 1412.4,291.3 1435.7,288.2 1453.9,283.0 1466.9,279.6 1500.6,274.7 1516.1,272.6 1531.7,267.4 1547.2,263.5 1560.0,261.1 1566.4,260.4 1575.5,240.1 1578.4,230.0 1583.3,220.6 1585.3,211.5 1599.0,211.5 1602.4,212.8 1606.5,215.2 1614.5,217.0 1619.0,217.0 1637.4,221.2 1642.0,222.9 1647.1,224.1 1655.7,227.2 1660.3,230.4 1666.0,232.9 1674.6,237.5 1683.2,241.3 1689.5,243.2 1694.7,246.4 1709.6,252.1 1714.7,255.0 1723.3,257.3 1732.5,259.0 1739.0,259.0" fill="none" stroke="#48108a" stroke-width="2" stroke-linejoin="round"/>
</g>
<rect x="129.5" y="209.5" width="1.5" height="262" fill="#000"/>
<rect x="120" y="209.5" width="10" height="1.2" fill="#000"/>
<rect x="120" y="275.5" width="10" height="1.2" fill="#000"/>
<rect x="120" y="340.5" width="10" height="1.2" fill="#000"/>
<rect x="120" y="405.5" width="10" height="1.2" fill="#000"/>
<rect x="120" y="471.5" width="10" height="1.2" fill="#000"/>
<rect x="130" y="209.5" width="10.5" height="1.2" fill="#000"/>
<rect x="130" y="261.5" width="10.5" height="1.2" fill="#000"/>
<rect x="130" y="314.5" width="10.5" height="1.2" fill="#000"/>
<rect x="130" y="366.5" width="10.5" height="1.2" fill="#000"/>
<rect x="130" y="419.5" width="10.5" height="1.2" fill="#000"/>
<rect x="130" y="471.5" width="10.5" height="1.2" fill="#000"/>
<rect x="130" y="235.5" width="7" height="1.2" fill="#000"/>
<rect x="130" y="288.5" width="7" height="1.2" fill="#000"/>
<rect x="130" y="340.5" width="7" height="1.2" fill="#000"/>
<rect x="130" y="392.5" width="7" height="1.2" fill="#000"/>
<rect x="130" y="445.5" width="7" height="1.2" fill="#000"/>
<rect x="1739" y="209.5" width="1.5" height="262" fill="#000"/>
<rect x="1740" y="209.5" width="9.5" height="1.2" fill="#000"/>
<rect x="1740" y="261.5" width="9.5" height="1.2" fill="#000"/>
<rect x="1740" y="314.5" width="9.5" height="1.2" fill="#000"/>
<rect x="1740" y="366.5" width="9.5" height="1.2" fill="#000"/>
<rect x="1740" y="419.5" width="9.5" height="1.2" fill="#000"/>
<rect x="1740" y="471.5" width="9.5" height="1.2" fill="#000"/>
<rect x="1740" y="235.5" width="6" height="1.2" fill="#000"/>
<rect x="1740" y="288.5" width="6" height="1.2" fill="#000"/>
<rect x="1740" y="340.5" width="6" height="1.2" fill="#000"/>
<rect x="1740" y="392.5" width="6" height="1.2" fill="#000"/>
<rect x="1740" y="445.5" width="6" height="1.2" fill="#000"/>
<rect x="380" y="471" width="1.5" height="10" fill="#000"/>
<rect x="662" y="471" width="1.5" height="10" fill="#000"/>
<rect x="958" y="471" width="1.5" height="10" fill="#000"/>
<rect x="1236" y="471" width="1.5" height="10" fill="#000"/>
<rect x="1514" y="471" width="1.5" height="10" fill="#000"/>
<g font-family="Liberation Sans, sans-serif" fill="#000">
<text x="116.5" y="214.3" font-size="12" text-anchor="end" >180</text>
<text x="116.5" y="280.4" font-size="12" text-anchor="end" >150</text>
<text x="116.5" y="345.6" font-size="12" text-anchor="end" >120</text>
<text x="116.5" y="410.7" font-size="12" text-anchor="end" >90</text>
<text x="116.5" y="476.2" font-size="12" text-anchor="end" >60</text>
<text x="143.5" y="214.3" font-size="12" text-anchor="start" >100</text>
<text x="143.5" y="266.3" font-size="12" text-anchor="start" >80</text>
<text x="143.5" y="319.5" font-size="12" text-anchor="start" >60</text>
<text x="143.5" y="371.5" font-size="12" text-anchor="start" >40</text>
<text x="143.5" y="424.4" font-size="12" text-anchor="start" >20</text>
<text x="143.5" y="476.3" font-size="12" text-anchor="start" >0</text>
<text x="1753.5" y="214.3" font-size="12" text-anchor="start" >100</text>
<text x="1753.5" y="266.3" font-size="12" text-anchor="start" >80</text>
<text x="1753.5" y="319.5" font-size="12" text-anchor="start" >60</text>
<text x="1753.5" y="371.5" font-size="12" text-anchor="start" >40</text>
<text x="1753.5" y="424.4" font-size="12" text-anchor="start" >20</text>
<text x="1753.5" y="476.3" font-size="12" text-anchor="start" >0</text>
<text x="380.0" y="495.5" font-size="12" text-anchor="middle" >0</text>
<text x="662.0" y="495.5" font-size="12" text-anchor="middle" >84</text>
<text x="958.0" y="495.5" font-size="12" text-anchor="middle" >150</text>
<text x="1236.0" y="495.5" font-size="12" text-anchor="middle" >210</text>
<text x="1514.0" y="495.5" font-size="12" text-anchor="middle" >270</text>
<text x="1737.0" y="512.0" font-size="13" text-anchor="end" >Zátěž [W]</text>
<rect x="85" y="203" width="4" height="17" fill="#400080"/>
<text transform="translate(84,221) rotate(90)" font-size="13">HR [1/min]</text>
<rect x="170" y="203" width="4" height="17" fill="#c80a3a"/>
<text transform="translate(168,221) rotate(90)" font-size="13">Glucidy [%]</text>
<rect x="1780" y="203" width="4" height="17" fill="#3a10c8"/>
<text transform="translate(1779,221) rotate(90)" font-size="13">Lipidy [%]</text>
</g>
</svg></div>
<div class="orb" style="left:1846.5px;top:168.0px"><div class="hl"></div><svg class="a" style="left:0;top:0" width="45" height="45"><path d="M15 11 L37 23 L15 35 Z" fill="#fff"/></svg></div>
<div class="a" style="left:1820px;top:225px;width:100px;text-align:center;font-size:11px;line-height:11.5px">Start měření<br>CPET</div>
<div class="orb" style="left:1846.5px;top:268.5px"><div class="hl"></div><svg class="a" style="left:0;top:0" width="45" height="45"><path d="M13 12 L27 8 L31 20 L17 23Z" fill="#eef2f6" stroke="#a0a8b0" stroke-width=".5"/><path d="M9 22 L30 18 L37 24 L37 32 L16 36 L9 30Z" fill="#d4d8dc" stroke="#888" stroke-width=".5"/><path d="M9 30 L16 36 L37 32" fill="none" stroke="#707478" stroke-width="1"/><rect x="17" y="30" width="14" height="3" fill="#606468" transform="skewY(-10)"/><circle cx="32" cy="24" r="1" fill="#40e040"/></svg></div>
<div class="a" style="left:1820px;top:323.5px;width:100px;text-align:center;font-size:11px">Tisk</div>
<div class="orb" style="left:1848.0px;top:357.5px"><div class="hl"></div><svg class="a" style="left:0;top:0" width="45" height="45"><path d="M9 34 L27 18" stroke="#303030" stroke-width="6" stroke-linecap="round"/><path d="M9 34 L27 18" stroke="#f4f4f4" stroke-width="4" stroke-linecap="round"/><path d="M16 12 L18 15 L21 14 L20 17 L23 19 L19 19 L18 22 L16 19 L13 19 L15 17Z M27 9 L29 13 L33 12 L31 16 L35 19 L30 19 L29 23 L27 19 L23 19 L26 16Z" fill="#f8c020" stroke="#c08010" stroke-width=".4"/></svg></div>
<div class="a" style="left:1820px;top:411px;width:100px;text-align:center;font-size:11px">Průvodce</div>
<div class="orb" style="left:1848.0px;top:445.5px"><div class="hl"></div><svg class="a" style="left:0;top:0" width="45" height="45"><path d="M9 18 Q22.5 6 36 18 M12.5 22 Q22.5 13 32.5 22 M16 26 Q22.5 20 29 26" fill="none" stroke="#f0f020" stroke-width="2.4"/><path d="M22.5 27 L28 36 H17 Z" fill="#fff" stroke="#101010" stroke-width="2"/></svg></div>
<div class="a" style="left:1820px;top:499px;width:100px;text-align:center;font-size:11px">Události</div>
<div class="orb" style="left:1848.0px;top:533.5px"><div class="hl"></div><svg class="a" style="left:0;top:0" width="45" height="45"><rect x="13" y="9" width="19" height="28" rx="1" fill="#d0d4d4" stroke="#888" stroke-width=".6"/><rect x="15" y="11" width="15" height="5" fill="#f0f8e0"/><g fill="#a8b0b0"><rect x="15" y="18" width="3" height="3"/><rect x="19" y="18" width="3" height="3"/><rect x="23" y="18" width="3" height="3"/><rect x="27" y="18" width="3" height="3"/><rect x="15" y="22" width="3" height="3"/><rect x="19" y="22" width="3" height="3"/><rect x="23" y="22" width="3" height="3"/><rect x="27" y="22" width="3" height="3"/><rect x="15" y="26" width="3" height="3"/><rect x="19" y="26" width="3" height="3"/><rect x="23" y="26" width="3" height="3"/><rect x="27" y="26" width="3" height="3"/><rect x="15" y="30" width="3" height="3"/><rect x="19" y="30" width="3" height="3"/><rect x="23" y="30" width="3" height="3"/><rect x="27" y="30" width="3" height="3"/></g></svg></div>
<div class="a" style="left:1820px;top:587px;width:100px;text-align:center;font-size:11px">Přepočet</div>
<div class="white" style="left:80px;top:532px;width:1735px;height:495px"></div>
<div class="a" style="left:80px;top:532px;width:1727px;height:28px;background:linear-gradient(180deg,#fafcff 0,#e8eef8 50%,#d0dcec 100%)"></div>
<div class="a" style="left:1808px;top:532px;width:7px;height:28px;background:linear-gradient(180deg,#fafcff 0,#e8eef8 50%,#d0dcec 100%)"></div>
<div class="a" style="left:195px;top:537px;width:5px;height:18px;background:#0a10f0"></div>
<div class="a" style="left:192px;top:538.5px;width:400px;text-align:right;font-size:16px">Regenerace</div>
<div class="a" style="left:600px;top:537px;width:5px;height:18px;background:#10f010"></div>
<div class="a" style="left:597px;top:538.5px;width:399px;text-align:right;font-size:16px">Obsáhlý</div>
<div class="a" style="left:1004px;top:537px;width:5px;height:18px;background:#f8f020"></div>
<div class="a" style="left:1001px;top:538.5px;width:399px;text-align:right;font-size:16px">Intenzivní</div>
<div class="a" style="left:1408px;top:537px;width:5px;height:18px;background:#f89850"></div>
<div class="a" style="left:1405px;top:538.5px;width:398px;text-align:right;font-size:16px">Interval tréninku</div>
<div class="a" style="left:80px;top:560px;width:111px;height:27px;background:linear-gradient(90deg,#ffffff 0,#f0f4fa 40%,#d2dcea 100%)"></div>
<div class="lbl" style="left:80px;top:566px;width:107px">Popis</div>
<div class="a" style="left:192px;top:560px;width:1615px;height:27px;background:#eef5fd"></div>
<div class="a" style="left:1808px;top:560px;width:5px;height:27px;background:#eef5fd"></div>
<div class="cell" style="left:192px;top:562.0px;width:404px">Velmi nízká intenzita. Tvorba energie aerobní</div>
<div class="cell" style="left:597px;top:562.0px;width:403px">Obsáhlý vytrvalostní trénink</div>
<div class="cell" style="left:1001px;top:562.0px;width:403px">Intenzivní vytrvalostní trénink</div>
<div class="cell" style="left:1405px;top:562.0px;width:402px">Improves strength endurance and lactate tolerance</div>
<div class="a" style="left:80px;top:588px;width:111px;height:27px;background:linear-gradient(90deg,#ffffff 0,#f0f4fa 40%,#d2dcea 100%)"></div>
<div class="lbl" style="left:80px;top:594px;width:107px">Trénink</div>
<div class="cell" style="left:192px;top:590.0px;width:404px">Regenerační vytrvalostní trénink</div>
<div class="cell" style="left:597px;top:590.0px;width:403px">Vytrvalostní trénink se střední intenzitou</div>
<div class="cell" style="left:1001px;top:590.0px;width:403px">Vytrvalostní trénink s vysokou intenzitou</div>
<div class="cell" style="left:1405px;top:590.0px;width:402px">Krátké intervaly velmi vysoké intenzity</div>
<div class="a" style="left:80px;top:616px;width:111px;height:43px;background:linear-gradient(90deg,#ffffff 0,#f0f4fa 40%,#d2dcea 100%)"></div>
<div class="lbl" style="left:80px;top:630px;width:107px">Rozsah HR</div>
<div class="a" style="left:192px;top:616px;width:1615px;height:43px;background:#eef5fd"></div>
<div class="a" style="left:1808px;top:616px;width:5px;height:43px;background:#eef5fd"></div>
<div class="cell" style="left:192px;top:617.5px;width:404px">78 1/min -<br>&nbsp;124 1/min</div>
<div class="cell" style="left:597px;top:617.5px;width:403px">124 1/min -<br>&nbsp;140 1/min</div>
<div class="cell" style="left:1001px;top:617.5px;width:403px">140 1/min -<br>&nbsp;151 1/min</div>
<div class="cell" style="left:1405px;top:617.5px;width:402px">151 1/min -<br>&nbsp;156 1/min</div>
<div class="a" style="left:80px;top:660px;width:111px;height:44px;background:linear-gradient(90deg,#ffffff 0,#f0f4fa 40%,#d2dcea 100%)"></div>
<div class="lbl" style="left:80px;top:674px;width:107px">Zátěž</div>
<div class="cell" style="left:192px;top:661.5px;width:404px">30 W -<br>174 W</div>
<div class="cell" style="left:597px;top:661.5px;width:403px">174 W -<br>228 W</div>
<div class="cell" style="left:1001px;top:661.5px;width:403px">228 W -<br>264 W</div>
<div class="cell" style="left:1405px;top:661.5px;width:402px">264 W -<br>276 W</div>
<div class="a" style="left:80px;top:706px;width:111px;height:149px;background:linear-gradient(90deg,#ffffff 0,#f0f4fa 40%,#d2dcea 100%)"></div>
<div class="lbl" style="left:80px;top:773px;width:107px">Zdroj energie</div>
<div class="a" style="left:1808px;top:706px;width:5px;height:149px;background:#eef6fd"></div>
<div class="a" style="left:237px;top:743px;width:135px;height:65px;background:#0000ff"></div>
<div class="a" style="left:417px;top:781px;width:135px;height:27px;background:#ff0000"></div>
<div class="a" style="left:262px;top:819px;width:60px;text-align:center;font-size:11px;line-height:12px">Tuk<br>71 %</div>
<div class="a" style="left:465px;top:819px;width:60px;text-align:center;font-size:11px;line-height:12px">CH<br>29 %</div>
<div class="a" style="left:641px;top:785px;width:135px;height:23px;background:#0000ff"></div>
<div class="a" style="left:821px;top:739px;width:135px;height:69px;background:#ff0000"></div>
<div class="a" style="left:666px;top:819px;width:60px;text-align:center;font-size:11px;line-height:12px">Tuk<br>25 %</div>
<div class="a" style="left:869px;top:819px;width:60px;text-align:center;font-size:11px;line-height:12px">CH<br>75 %</div>
<div class="a" style="left:1045px;top:802px;width:135px;height:6px;background:#0000ff"></div>
<div class="a" style="left:1225px;top:722px;width:135px;height:86px;background:#ff0000"></div>
<div class="a" style="left:1070px;top:819px;width:60px;text-align:center;font-size:11px;line-height:12px">Tuk<br>7 %</div>
<div class="a" style="left:1273px;top:819px;width:60px;text-align:center;font-size:11px;line-height:12px">CH<br>93 %</div>
<div class="a" style="left:1629px;top:716px;width:135px;height:92px;background:#ff0000"></div>
<div class="a" style="left:1474px;top:819px;width:60px;text-align:center;font-size:11px;line-height:12px">Tuk<br>0 %</div>
<div class="a" style="left:1677px;top:819px;width:60px;text-align:center;font-size:11px;line-height:12px">CH<br>100 %</div>
<div class="a" style="left:80px;top:856px;width:111px;height:27px;background:linear-gradient(90deg,#ffffff 0,#f0f4fa 40%,#d2dcea 100%)"></div>
<div class="lbl" style="left:80px;top:862px;width:107px">VO2</div>
<div class="cell" style="left:192px;top:858.0px;width:404px">1,31 l/min</div>
<div class="cell" style="left:597px;top:858.0px;width:403px">2,13 l/min</div>
<div class="cell" style="left:1001px;top:858.0px;width:403px">2,56 l/min</div>
<div class="cell" style="left:1405px;top:858.0px;width:402px">2,83 l/min</div>
<div class="a" style="left:80px;top:884px;width:111px;height:27px;background:linear-gradient(90deg,#ffffff 0,#f0f4fa 40%,#d2dcea 100%)"></div>
<div class="lbl" style="left:80px;top:890px;width:107px">VO2/kg</div>
<div class="a" style="left:192px;top:884px;width:1615px;height:27px;background:#eef5fd"></div>
<div class="a" style="left:1808px;top:884px;width:5px;height:27px;background:#eef5fd"></div>
<div class="cell" style="left:192px;top:886.0px;width:404px">15,4 ml/min/kg</div>
<div class="cell" style="left:597px;top:886.0px;width:403px">25,1 ml/min/kg</div>
<div class="cell" style="left:1001px;top:886.0px;width:403px">30,1 ml/min/kg</div>
<div class="cell" style="left:1405px;top:886.0px;width:402px">33,3 ml/min/kg</div>
<div class="a" style="left:80px;top:912px;width:111px;height:27px;background:linear-gradient(90deg,#ffffff 0,#f0f4fa 40%,#d2dcea 100%)"></div>
<div class="lbl" style="left:80px;top:918px;width:107px">VCO2</div>
<div class="cell" style="left:192px;top:914.0px;width:404px">1,01 l/min</div>
<div class="cell" style="left:597px;top:914.0px;width:403px">1,94 l/min</div>
<div class="cell" style="left:1001px;top:914.0px;width:403px">2,55 l/min</div>
<div class="cell" style="left:1405px;top:914.0px;width:402px">2,99 l/min</div>
<div class="a" style="left:80px;top:940px;width:111px;height:27px;background:linear-gradient(90deg,#ffffff 0,#f0f4fa 40%,#d2dcea 100%)"></div>
<div class="lbl" style="left:80px;top:946px;width:107px">RER</div>
<div class="a" style="left:192px;top:940px;width:1615px;height:27px;background:#eef5fd"></div>
<div class="a" style="left:1808px;top:940px;width:5px;height:27px;background:#eef5fd"></div>
<div class="cell" style="left:192px;top:942.0px;width:404px">0,77</div>
<div class="cell" style="left:597px;top:942.0px;width:403px">0,91</div>
<div class="cell" style="left:1001px;top:942.0px;width:403px">0,99</div>
<div class="cell" style="left:1405px;top:942.0px;width:402px">1,06</div>
<div class="a" style="left:80px;top:968px;width:111px;height:27px;background:linear-gradient(90deg,#ffffff 0,#f0f4fa 40%,#d2dcea 100%)"></div>
<div class="lbl" style="left:80px;top:974px;width:107px">Lipidy</div>
<div class="cell" style="left:192px;top:970.0px;width:404px">4,4 kcal/min</div>
<div class="cell" style="left:597px;top:970.0px;width:403px">2,7 kcal/min</div>
<div class="cell" style="left:1001px;top:970.0px;width:403px">1,0 kcal/min</div>
<div class="cell" style="left:1405px;top:970.0px;width:402px">0,0 kcal/min</div>
<div class="a" style="left:80px;top:996px;width:111px;height:27px;background:linear-gradient(90deg,#ffffff 0,#f0f4fa 40%,#d2dcea 100%)"></div>
<div class="lbl" style="left:80px;top:1002px;width:107px">Glucidy</div>
<div class="a" style="left:192px;top:996px;width:1615px;height:27px;background:#eef5fd"></div>
<div class="a" style="left:1808px;top:996px;width:5px;height:27px;background:#eef5fd"></div>
<div class="cell" style="left:192px;top:998.0px;width:404px">1,8 kcal/min</div>
<div class="cell" style="left:597px;top:998.0px;width:403px">8,1 kcal/min</div>
<div class="cell" style="left:1001px;top:998.0px;width:403px">13,7 kcal/min</div>
<div class="cell" style="left:1405px;top:998.0px;width:402px">18,3 kcal/min</div>
<div class="a" style="left:596px;top:532px;width:1px;height:493px;background:#000"></div>
<div class="a" style="left:1000px;top:532px;width:1px;height:493px;background:#000"></div>
<div class="a" style="left:1404px;top:532px;width:1px;height:493px;background:#000"></div>
<div class="a" style="left:75px;top:1032px;width:1845px;height:28px;background:#96badc;border-top:1px solid #f4f8fc;border-right:1px solid #484848;border-bottom:1px solid #505050"></div>
<div class="a" style="left:82px;top:1040px;border-left:7px solid transparent;border-right:7px solid transparent;border-top:14px solid #10283c"></div>
<div class="a" style="left:106px;top:1040px;font-size:11px;color:#1a2a40">Komentář</div>
<div class="a" style="left:0;top:1060px;width:1920px;height:20px;background:linear-gradient(180deg,#ffffff 0,#f4f4f4 30%,#d8d8d8 90%,#404040 90%,#404040 95%,#c0d0e0 95%)"></div>
<div class="a" style="left:2px;top:1064px;font-size:11px;letter-spacing:-0.6px">BTPS:</div>
<svg class="a" style="left:47px;top:1062px" width="9" height="17"><rect x="3" y="1" width="3" height="10" rx="1.5" fill="#f0f0f0" stroke="#a0a0a0" stroke-width=".5"/><circle cx="4.5" cy="13" r="3.5" fill="#e02020"/></svg>
<div class="a" style="left:62px;top:1064px;font-size:11px">28,0 °C</div>
<svg class="a" style="left:109px;top:1062px" width="15" height="16"><circle cx="7.5" cy="8" r="6.5" fill="#f4f8fc" stroke="#404040" stroke-width="1"/><path d="M4 5 L8 9" stroke="#202020"/></svg>
<div class="a" style="left:126px;top:1064px;font-size:11px">963 hPa</div>
<svg class="a" style="left:178px;top:1062px" width="12" height="17"><path d="M6 1 Q1 9 1 12 A5 5 0 0 0 11 12 Q11 9 6 1Z" fill="#2a8ae8"/></svg>
<div class="a" style="left:195px;top:1064px;font-size:11px">35 %</div>
</body></html>
